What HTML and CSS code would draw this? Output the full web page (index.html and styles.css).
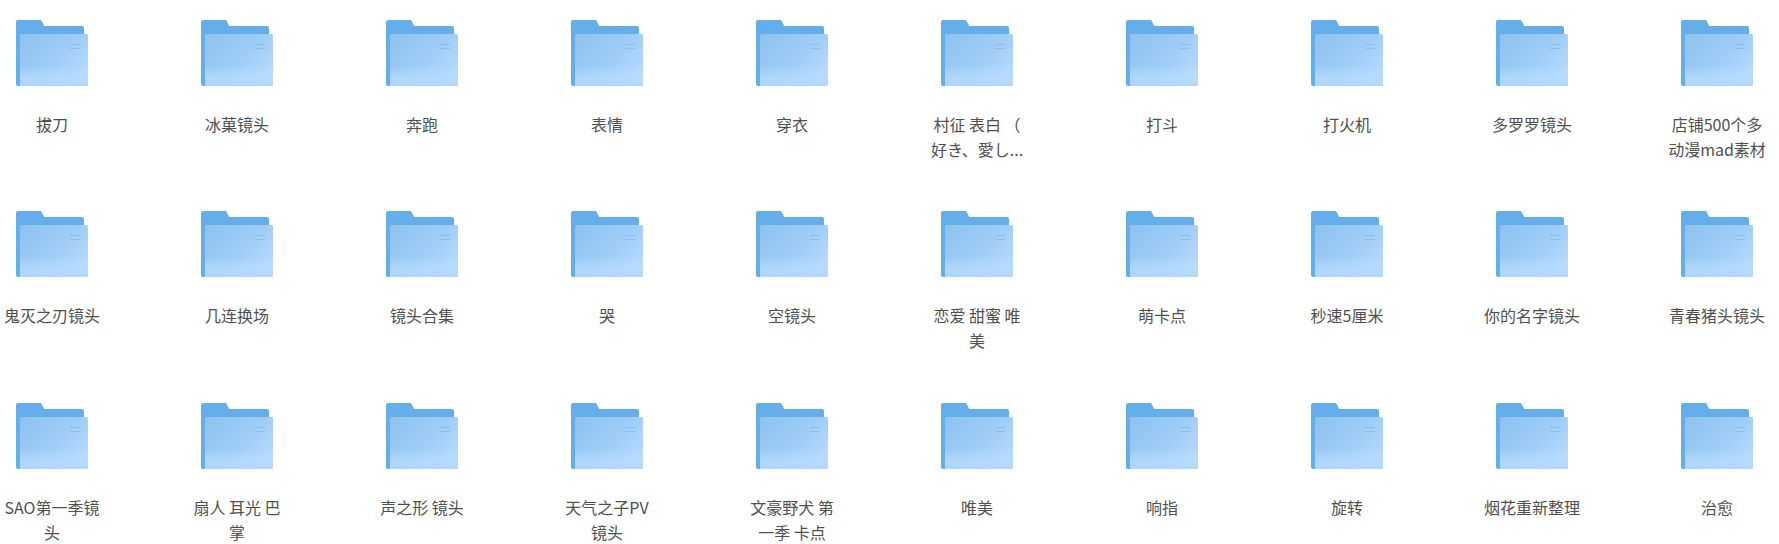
FILE: index.html
```html
<!DOCTYPE html>
<html lang="zh">
<head>
  <meta charset="UTF-8" />
  <title>素材</title>
  <link rel="stylesheet" href="styles.css">
</head>
<body>
  <svg class="defs" width="0" height="0">
    <defs>
      <linearGradient id="front" x1="0" y1="0" x2="1" y2="0.7">
        <stop offset="0" stop-color="#8ec2ef" />
        <stop offset="0.6" stop-color="#9fcdf6" />
        <stop offset="1" stop-color="#b4dafd" />
      </linearGradient>
      <linearGradient id="glow" x1="0" y1="0" x2="0" y2="1">
        <stop offset="0.6" stop-color="#b8dcfd" stop-opacity="0" />
        <stop offset="0.85" stop-color="#b8dcfd" stop-opacity="0.75" />
        <stop offset="1" stop-color="#b0d6fb" stop-opacity="0.9" />
      </linearGradient>
      <symbol id="folder" viewBox="0 0 72 66">
        <path d="M0 2a2 2 0 0 1 2-2h23l2.500 4.500a1.500 1.500 0 0 0 1.300 1.500H66a2 2 0 0 1 2 2v10H4v48H2a2 2 0 0 1-2-2z" fill="#64afeb" />
        <rect x="4" y="14" width="68" height="52" rx="1.500" fill="url(#front)" />
        <rect x="4" y="14" width="68" height="52" rx="1.500" fill="url(#glow)" />
        <path d="M54 24.500h10M54 28.500h10" stroke="#8dbde8" stroke-width="1" />
      </symbol>
    </defs>
  </svg>

  <div class="grid">
    <div class="item"><svg class="icon"><use href="#folder" /></svg><div class="name">拔刀</div></div>
    <div class="item"><svg class="icon"><use href="#folder" /></svg><div class="name">冰菓镜头</div></div>
    <div class="item"><svg class="icon"><use href="#folder" /></svg><div class="name">奔跑</div></div>
    <div class="item"><svg class="icon"><use href="#folder" /></svg><div class="name">表情</div></div>
    <div class="item"><svg class="icon"><use href="#folder" /></svg><div class="name">穿衣</div></div>
    <div class="item"><svg class="icon"><use href="#folder" /></svg><div class="name">村征 表白 （<br>好き、愛し...</div></div>
    <div class="item"><svg class="icon"><use href="#folder" /></svg><div class="name">打斗</div></div>
    <div class="item"><svg class="icon"><use href="#folder" /></svg><div class="name">打火机</div></div>
    <div class="item"><svg class="icon"><use href="#folder" /></svg><div class="name">多罗罗镜头</div></div>
    <div class="item"><svg class="icon"><use href="#folder" /></svg><div class="name">店铺500个多动漫mad素材</div></div>

    <div class="item"><svg class="icon"><use href="#folder" /></svg><div class="name">鬼灭之刃镜头</div></div>
    <div class="item"><svg class="icon"><use href="#folder" /></svg><div class="name">几连换场</div></div>
    <div class="item"><svg class="icon"><use href="#folder" /></svg><div class="name">镜头合集</div></div>
    <div class="item"><svg class="icon"><use href="#folder" /></svg><div class="name">哭</div></div>
    <div class="item"><svg class="icon"><use href="#folder" /></svg><div class="name">空镜头</div></div>
    <div class="item"><svg class="icon"><use href="#folder" /></svg><div class="name">恋爱 甜蜜 唯美</div></div>
    <div class="item"><svg class="icon"><use href="#folder" /></svg><div class="name">萌卡点</div></div>
    <div class="item"><svg class="icon"><use href="#folder" /></svg><div class="name">秒速5厘米</div></div>
    <div class="item"><svg class="icon"><use href="#folder" /></svg><div class="name">你的名字镜头</div></div>
    <div class="item"><svg class="icon"><use href="#folder" /></svg><div class="name">青春猪头镜头</div></div>

    <div class="item"><svg class="icon"><use href="#folder" /></svg><div class="name">SAO第一季镜头</div></div>
    <div class="item"><svg class="icon"><use href="#folder" /></svg><div class="name">扇人 耳光 巴掌</div></div>
    <div class="item"><svg class="icon"><use href="#folder" /></svg><div class="name">声之形 镜头</div></div>
    <div class="item"><svg class="icon"><use href="#folder" /></svg><div class="name">天气之子PV镜头</div></div>
    <div class="item"><svg class="icon"><use href="#folder" /></svg><div class="name">文豪野犬 第一季 卡点</div></div>
    <div class="item"><svg class="icon"><use href="#folder" /></svg><div class="name">唯美</div></div>
    <div class="item"><svg class="icon"><use href="#folder" /></svg><div class="name">响指</div></div>
    <div class="item"><svg class="icon"><use href="#folder" /></svg><div class="name">旋转</div></div>
    <div class="item"><svg class="icon"><use href="#folder" /></svg><div class="name">烟花重新整理</div></div>
    <div class="item"><svg class="icon"><use href="#folder" /></svg><div class="name">治愈</div></div>
  </div>
</body>
</html>
```

FILE: styles.css
```css
* {
  box-sizing: border-box;
}

html, body {
  margin: 0;
  padding: 0;
  height: 100%;
  background-color: #fff;
  overflow: hidden;
}

.defs {
  display: block;
  height: 0;
}

.grid {
  display: grid;
  grid-template-columns: repeat(10, 185px);
  grid-template-rows: 191px 192px 121px;
  height: 544px;
  padding-top: 20px;
  overflow: hidden;
}

.item {
  width: 104px;
  min-height: 0;
  display: flex;
  flex-direction: column;
  align-items: center;
}

.icon {
  width: 72px;
  height: 66px;
  flex-shrink: 0;
  display: block;
}

.name {
  width: 99px;
  margin-top: 26px;
  font-family: "Noto Sans CJK SC", "Noto Sans", sans-serif;
  font-size: 16px;
  line-height: 25px;
  color: #505050;
  text-align: center;
}
```
